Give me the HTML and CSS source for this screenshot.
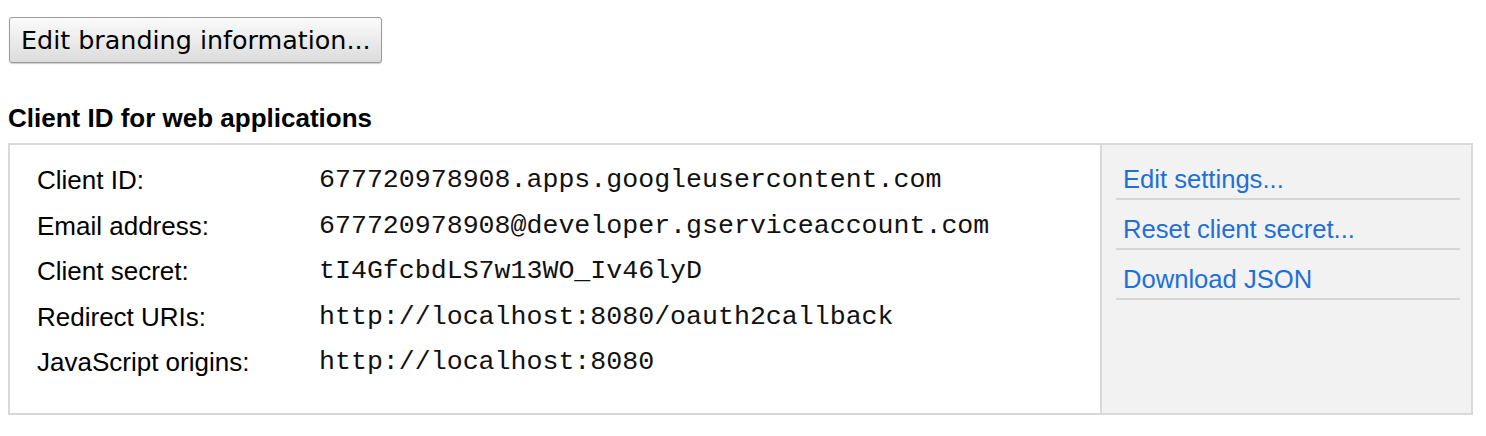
FILE: index.html
```html
<!DOCTYPE html>
<html>
<head>
<meta charset="utf-8">
<link rel="stylesheet" href="styles.css">
</head>
<body>
<div class="toolbar">
  <button class="btn">Edit branding information...</button>
</div>
<h2 class="heading">Client ID for web applications</h2>
<div class="box">
  <div class="details">
    <div class="row"><span class="label">Client ID:</span><span class="value">677720978908.apps.googleusercontent.com</span></div>
    <div class="row"><span class="label">Email address:</span><span class="value">677720978908@developer.gserviceaccount.com</span></div>
    <div class="row"><span class="label">Client secret:</span><span class="value">tI4GfcbdLS7w13WO_Iv46lyD</span></div>
    <div class="row"><span class="label">Redirect URIs:</span><span class="value">http://localhost:8080/oauth2callback</span></div>
    <div class="row"><span class="label">JavaScript origins:</span><span class="value">http://localhost:8080</span></div>
  </div>
  <div class="actions">
    <a class="action" href="#">Edit settings...</a>
    <a class="action" href="#">Reset client secret...</a>
    <a class="action" href="#">Download JSON</a>
  </div>
</div>
</body>
</html>
```
FILE: styles.css
```css
html, body {
  margin: 0;
  padding: 0;
  background: #ffffff;
}
body {
  padding: 0 8px;
  font-family: "Liberation Sans", Arial, sans-serif;
  font-size: 26px;
  color: #000;
}
.toolbar {
  padding-top: 17px;
  display: flex;
}
.btn {
  margin: 0 0 0 1px;
  width: 373px;
  height: 46px;
  padding: 0 0 0 11px;
  text-align: left;
  font-family: "DejaVu Sans", Verdana, sans-serif;
  font-size: 25.4px;
  color: #000;
  border: 1px solid #9a9a9a;
  border-radius: 3px;
  background: linear-gradient(#fbfbfb, #e8e8e8 60%, #dcdcdc);
  box-shadow: 0 1px 1px rgba(0,0,0,0.2);
}
.heading {
  margin: 40px 0 10px 0;
  font-size: 26px;
  line-height: 30px;
  font-weight: bold;
}
.box {
  display: flex;
  width: 1461px;
  height: 268px;
  border: 2px solid #d9d9d9;
}
.details {
  flex: 1;
  padding: 13px 0 0 27px;
}
.row {
  display: flex;
  height: 45.5px;
  line-height: 45.5px;
  white-space: nowrap;
}
.label {
  width: 282px;
  flex: none;
}
.value {
  font-family: "Liberation Mono", "Courier New", monospace;
  font-size: 26.6px;
  color: #111;
}
.actions {
  width: 344px;
  flex: none;
  background: #f2f2f2;
  border-left: 2px solid #d9d9d9;
  padding: 5px 11px 0 14px;
  display: flex;
  flex-direction: column;
}
.action {
  display: block;
  padding: 14px 7px 4px 7px;
  line-height: 30px;
  border-bottom: 2px solid #d6d6d6;
  color: #1f6fd8;
  text-decoration: none;
  font-size: 25.6px;
}
```
